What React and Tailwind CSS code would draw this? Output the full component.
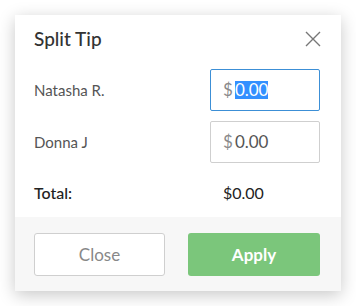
function AmountBox({ active, selected }) {
    return (
        <div
            className={
                "w-[110px] h-[42px] flex items-center pl-[12px] rounded-[2px] bg-white border " +
                (active ? "border-[#3c8fd6]" : "border-[#cfcfcf]")
            }
        >
            <span className="text-[17px] text-[#8a8a8a] mr-[2px]">$</span>
            {selected ? (
                <span className="text-[17px] leading-[18px] bg-[#3390ff] text-white">0.00</span>
            ) : (
                <span className="text-[17px] text-[#555]">0.00</span>
            )}
        </div>
    );
}

export default function App() {
    const people = [
        { name: "Natasha R.", active: true },
        { name: "Donna J", active: false },
    ];

    return (
        <div className="w-[356px] h-[306px] bg-white p-[15px]" style={{ fontFamily: "Lato, 'Open Sans', sans-serif" }}>
            <div className="w-[326px] h-[276px] bg-white shadow-[0_4px_16px_rgba(0,0,0,0.22)] flex flex-col">
                <div className="flex items-center justify-between pl-[19px] pr-[20px] pt-[12px]">
                    <h2 className="text-[19px] leading-[24px] font-medium text-[#333]">Split Tip</h2>
                    <svg width="16" height="16" viewBox="0 0 16 16" className="text-[#777]">
                        <path d="M1 1 L15 15 M15 1 L1 15" stroke="currentColor" strokeWidth="1.4" fill="none" />
                    </svg>
                </div>

                <div className="flex flex-col gap-[10px] mt-[18px] pl-[19px] pr-[21px]">
                    {people.map((p) => (
                        <div key={p.name} className="flex items-center justify-between">
                            <span className="text-[15px] text-[#555]">{p.name}</span>
                            <AmountBox active={p.active} selected={p.active} />
                        </div>
                    ))}
                </div>

                <div className="flex items-center justify-between mt-[18px] pl-[19px] pr-[21px]">
                    <span className="text-[16px] leading-[24px] font-medium text-[#222]">Total:</span>
                    <span className="w-[110px] pl-[13px] text-[16px] text-[#222]">$0.00</span>
                </div>

                <div className="mt-auto h-[74px] bg-[#f7f7f7] flex items-center justify-between pl-[19px] pr-[21px] pt-[1px]">
                    <button className="w-[131px] h-[43px] bg-white border border-[#cfcfcf] rounded-[3px] text-[17px] text-[#888]">
                        Close
                    </button>
                    <button className="w-[132px] h-[43px] bg-[#7bc67b] rounded-[3px] text-[17px] font-bold text-white">
                        Apply
                    </button>
                </div>
            </div>
        </div>
    );
}
